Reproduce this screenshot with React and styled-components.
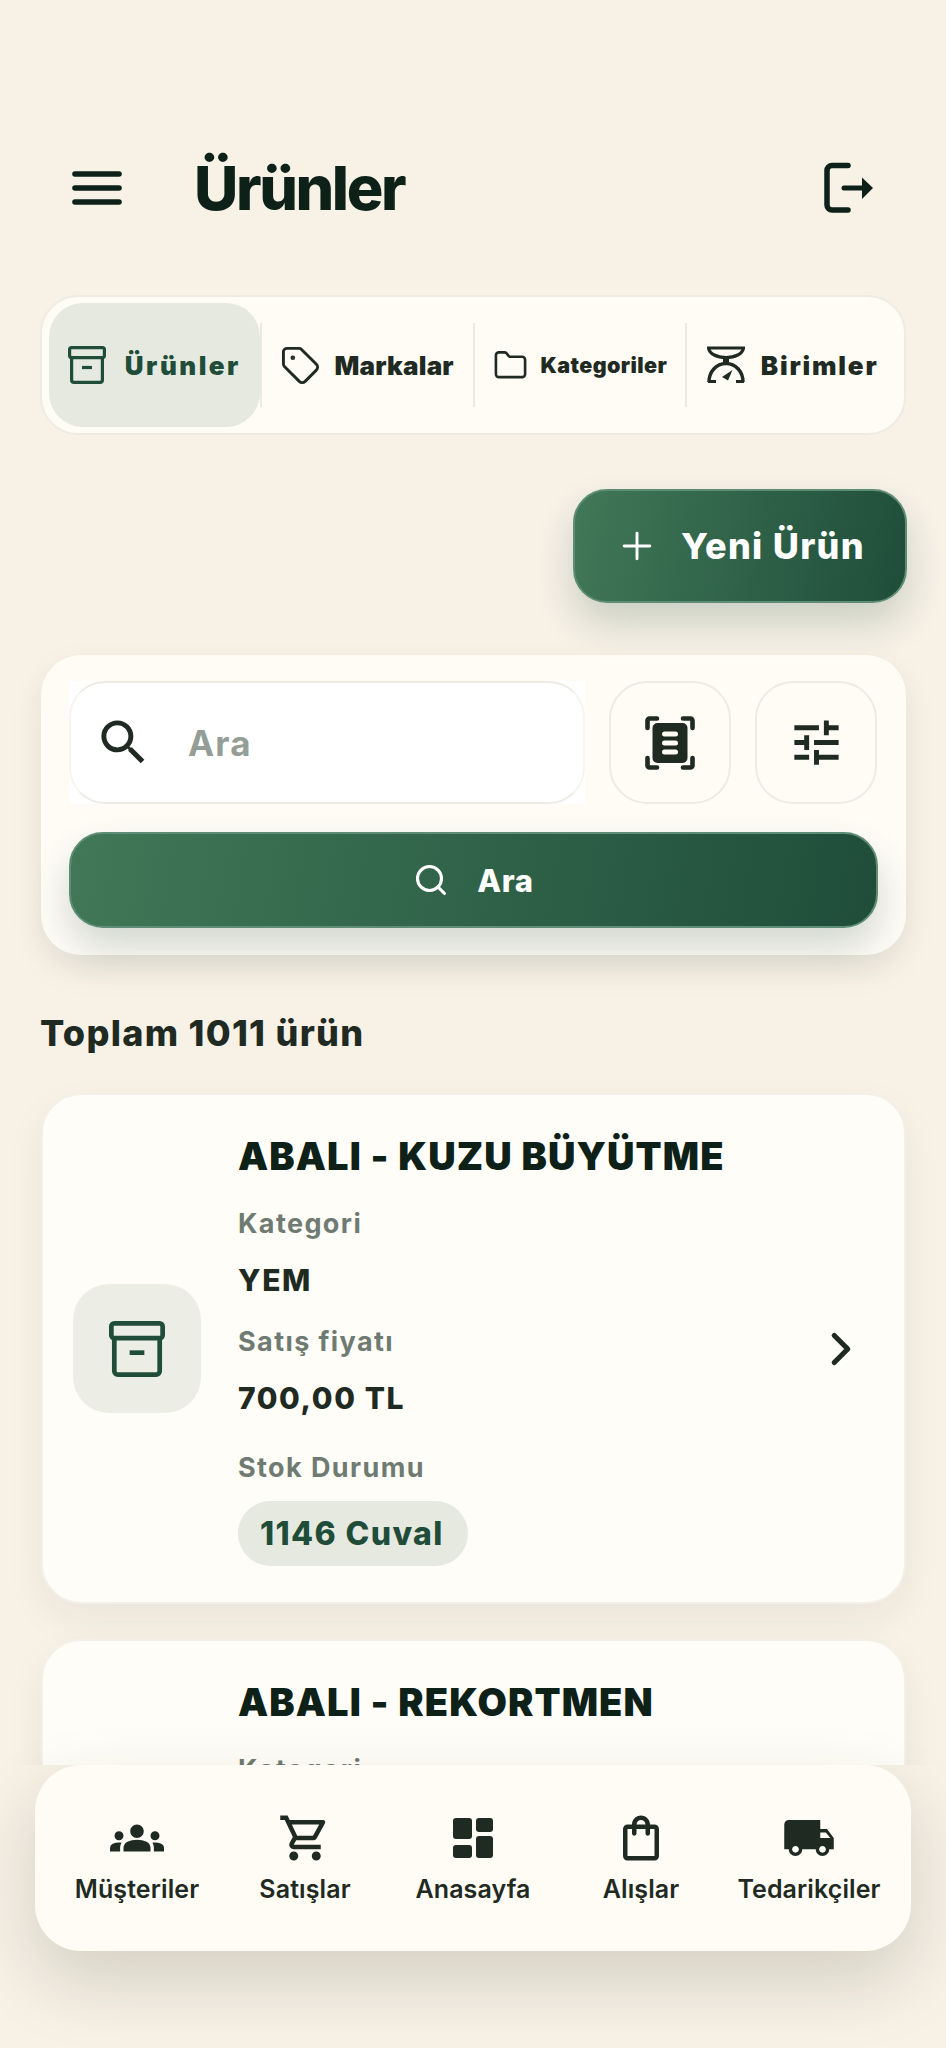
import React from "react";
import styled, { createGlobalStyle } from "styled-components";
import { Tag, Folder, Search, Plus, ChevronRight } from "lucide-react";
import {
  MdGroups,
  MdOutlineShoppingCart,
  MdOutlineShoppingBag,
  MdLocalShipping,
  MdTune,
  MdSearch,
} from "react-icons/md";

const INK = "#1f2a22";
const DARK = "#0d2118";
const GREEN = "#1f4d3a";

const GlobalStyle = createGlobalStyle`
  html, body {
    margin: 0;
    padding: 0;
    background: #f7f1e6;
    font-family: Inter, "Noto Sans", sans-serif;
  }
  * { box-sizing: border-box; }
`;

const Page = styled.div`
  height: 2048px;
  overflow: hidden;
  display: flex;
  flex-direction: column;
  background: #f7f1e6;
`;

const Scroll = styled.div`
  height: 1765px;
  flex: none;
  overflow: hidden;
  padding: 150px 40px 0 41px;
`;

const Header = styled.header`
  height: 76px;
  display: flex;
  align-items: center;
  margin-bottom: 69px;
`;

const IconSlot = styled.div`
  display: flex;
  align-items: center;
  justify-content: center;
  color: ${DARK};
`;

const MenuSlot = styled(IconSlot)`
  margin-left: 31px;
  width: 50px;
`;

const Title = styled.h1`
  flex: 1;
  margin: 0 0 0 72px;
  font-size: 61px;
  line-height: 76px;
  font-weight: 800;
  letter-spacing: -2.4px;
  color: ${DARK};
`;

const LogoutSlot = styled(IconSlot)`
  margin-right: 31px;
`;

const TabBar = styled.nav`
  height: 140px;
  margin-left: -1px;
  padding: 6px 6px 6px 7px;
  display: flex;
  align-items: center;
  background: #fffcf5;
  border: 2px solid #eeebe3;
  border-radius: 38px;
`;

const TabItem = styled.div`
  flex: 1;
  min-width: 0;
  height: 124px;
  display: flex;
  align-items: center;
  justify-content: center;
  gap: ${(p) => p.$gap}px;
  border-radius: 34px;
  color: ${(p) => (p.$active ? GREEN : INK)};
  background: ${(p) => (p.$active ? "#e6e9e0" : "transparent")};
`;

const TabLabel = styled.span`
  font-size: ${(p) => p.$size}px;
  font-weight: 900;
  letter-spacing: ${(p) => p.$spacing}px;
  white-space: nowrap;
`;

const TabDivider = styled.div`
  flex: none;
  width: 2px;
  height: 84px;
  background: #ebe9e1;
`;

const Actions = styled.div`
  display: flex;
  justify-content: flex-end;
  margin: 54px -1px 52px 0;
`;

const GradientButton = styled.button`
  display: flex;
  align-items: center;
  justify-content: center;
  font-family: inherit;
  color: #fff;
  background: linear-gradient(100deg, #417857 0%, #1f4d3a 100%);
  border: 2px solid #5f8c74;
  border-radius: 34px;
  box-shadow: 0 20px 38px rgba(31, 77, 58, 0.2);
`;

const NewButton = styled(GradientButton)`
  width: 334px;
  height: 114px;
  gap: 22px;
  font-size: 36px;
  font-weight: 800;
  letter-spacing: 1.3px;
`;

const SearchCard = styled.section`
  height: 300px;
  padding: 26px 28px 27px 28px;
  background: #fffcf6;
  border-radius: 40px;
  box-shadow: 0 14px 34px rgba(40, 50, 30, 0.08);
`;

const SearchRow = styled.div`
  display: flex;
  gap: 24px;
  margin: 0 1px 28px 0;
`;

const FieldBack = styled.div`
  flex: 1;
  height: 123px;
  background: #fff;
`;

const Field = styled.div`
  height: 100%;
  display: flex;
  align-items: center;
  gap: 35px;
  padding-left: 23px;
  border: 2px solid #f7f5f1;
  border-top-color: #eeebe5;
  border-bottom-color: #eeebe5;
  border-radius: 36px;
  color: ${INK};
`;

const Placeholder = styled.span`
  font-size: 35px;
  font-weight: 700;
  letter-spacing: 1.2px;
  color: #949e97;
`;

const SquareButton = styled.button`
  flex: none;
  width: 122px;
  height: 123px;
  display: flex;
  align-items: center;
  justify-content: center;
  color: ${INK};
  background: #fffcf6;
  border: 2px solid #eeebe5;
  border-radius: 38px;
`;

const SearchButton = styled(GradientButton)`
  width: 100%;
  height: 96px;
  gap: 28px;
  font-size: 31px;
  font-weight: 800;
  letter-spacing: 0.7px;
`;

const Total = styled.h2`
  margin: 56px 0 38px -1px;
  font-size: 36px;
  line-height: 44px;
  font-weight: 800;
  letter-spacing: 1.3px;
  color: ${INK};
`;

const Card = styled.article`
  height: 511px;
  margin-bottom: 35px;
  padding: 0 36px 0 30px;
  display: flex;
  align-items: center;
  background: #fffdf7;
  border: 2px solid #f3f0e9;
  border-radius: 40px;
  box-shadow: 0 16px 40px rgba(40, 50, 30, 0.06);
`;

const ThumbBox = styled.div`
  flex: none;
  width: 128px;
  height: 129px;
  margin-right: 37px;
  display: flex;
  align-items: center;
  justify-content: center;
  background: #eceee6;
  border-radius: 36px;
  color: ${GREEN};
`;

const CardBody = styled.div`
  flex: 1;
  min-width: 0;
  align-self: flex-start;
  padding-top: 39px;
`;

const ProductName = styled.h3`
  margin: 0;
  font-size: 38px;
  line-height: 44px;
  font-weight: 900;
  letter-spacing: 1.1px;
  color: ${DARK};
`;

const FieldLabel = styled.div`
  margin-top: ${(p) => p.$top}px;
  font-size: 27px;
  line-height: 30px;
  font-weight: 700;
  letter-spacing: 1.4px;
  color: #6f7b72;
`;

const FieldValue = styled.div`
  margin-top: 24px;
  font-size: 30px;
  line-height: 34px;
  font-weight: 800;
  letter-spacing: 1.6px;
  color: ${INK};
`;

const StockPill = styled.div`
  display: inline-flex;
  align-items: center;
  height: 65px;
  margin-top: 18px;
  padding: 0 24px 0 22px;
  font-size: 32px;
  font-weight: 800;
  letter-spacing: 1.4px;
  color: ${GREEN};
  background: #e6e9e0;
  border-radius: 33px;
`;

const Chevron = styled.div`
  flex: none;
  display: flex;
  color: ${INK};
`;

const BottomNav = styled.nav`
  position: relative;
  flex: none;
  height: 186px;
  margin: 0 35px 0 35px;
  padding: 0 18px;
  display: grid;
  grid-template-columns: repeat(5, 1fr);
  align-items: start;
  background: #fffcf5;
  border-radius: 46px;
  box-shadow: 0 30px 70px rgba(40, 50, 30, 0.17);
`;

const NavItem = styled.div`
  display: flex;
  flex-direction: column;
  align-items: center;
  padding-top: 46px;
  color: ${INK};
`;

const NavLabel = styled.span`
  margin-top: 9px;
  font-size: 25px;
  line-height: 30px;
  font-weight: 600;
  letter-spacing: 0.1px;
  white-space: nowrap;
`;

const MenuIcon = () => (
  <svg width="50" height="36" viewBox="0 0 50 36" fill="none" stroke="currentColor" strokeWidth="5.6" strokeLinecap="round">
    <path d="M3 4H47M3 18H47M3 32H47" />
  </svg>
);

const LogoutIcon = () => (
  <svg width="52" height="52" viewBox="0 0 52 52" fill="none">
    <path d="M25 3.5H9a5 5 0 0 0-5 5V43a5 5 0 0 0 5 5H25" stroke="currentColor" strokeWidth="5.5" strokeLinecap="round" />
    <path d="M21 26H42" stroke="currentColor" strokeWidth="5" strokeLinecap="round" />
    <path d="M39 15.5L50 26L39 37Z" fill="currentColor" />
  </svg>
);

const ArchiveIcon = ({ size }) => (
  <svg width={size} height={size} viewBox="0 0 38 38" fill="none" stroke="currentColor" strokeWidth="3.2" strokeLinejoin="round">
    <rect x="1.6" y="1.6" width="34.8" height="10" rx="2" />
    <path d="M3.6 11.6V34a2.4 2.4 0 0 0 2.4 2.4h26a2.4 2.4 0 0 0 2.4-2.4V11.6" />
    <path d="M14 21.5H24" />
  </svg>
);

const ScaleIcon = () => (
  <svg width="38" height="38" viewBox="0 0 38 38" fill="none">
    <path d="M1.5 2H36.5C35.5 8 28 11.5 19 11.5C10 11.5 2.5 8 1.5 2Z" stroke="currentColor" strokeWidth="3.2" />
    <rect x="16" y="11" width="6" height="8" fill="currentColor" />
    <path d="M2 36C2 26 9 17.5 19 17.5C29 17.5 36 26 36 36" stroke="currentColor" strokeWidth="3.4" />
    <path d="M1 35.5H9M29 35.5H37" stroke="currentColor" strokeWidth="3" />
    <path d="M25.5 24L21 34.5L15 31Z" fill="currentColor" />
  </svg>
);

const BarcodeIcon = () => (
  <svg width="50" height="54" viewBox="0 0 50 54" fill="none">
    <path
      d="M12 2.5H4.5a2 2 0 0 0-2 2V12M38 2.5H45.5a2 2 0 0 1 2 2V12M12 51.5H4.5a2 2 0 0 1-2-2V42M38 51.5H45.5a2 2 0 0 0 2-2V42"
      stroke="currentColor"
      strokeWidth="4.6"
      strokeLinecap="round"
    />
    <rect x="7.5" y="7" width="35" height="40" rx="5" fill="currentColor" />
    <rect x="17" y="15.5" width="16" height="5" rx="2.5" fill="#fffcf6" />
    <rect x="17" y="24.5" width="16" height="5" rx="2.5" fill="#fffcf6" />
    <rect x="17" y="33.5" width="16" height="5" rx="2.5" fill="#fffcf6" />
  </svg>
);

const DashboardIcon = () => (
  <svg width="54" height="54" viewBox="0 0 54 54" fill="currentColor">
    <rect x="7" y="7" width="19" height="21" rx="3" />
    <rect x="7" y="34" width="19" height="13" rx="3" />
    <rect x="30" y="7" width="17" height="14" rx="3" />
    <rect x="30" y="25" width="17" height="22" rx="3" />
  </svg>
);

const tabs = [
  { label: "Ürünler", icon: <ArchiveIcon size={38} />, active: true, size: 26, spacing: 2.5, gap: 19 },
  { label: "Markalar", icon: <Tag size={41} strokeWidth={1.7} />, size: 26, spacing: 0.2, gap: 13 },
  { label: "Kategoriler", icon: <Folder size={35} strokeWidth={1.8} />, size: 21.5, spacing: 0.4, gap: 13 },
  { label: "Birimler", icon: <ScaleIcon />, size: 26, spacing: 1.8, gap: 16 },
];

const navItems = [
  { label: "Müşteriler", icon: <MdGroups size={54} /> },
  { label: "Satışlar", icon: <MdOutlineShoppingCart size={54} /> },
  { label: "Anasayfa", icon: <DashboardIcon /> },
  { label: "Alışlar", icon: <MdOutlineShoppingBag size={54} /> },
  { label: "Tedarikçiler", icon: <MdLocalShipping size={54} /> },
];

// the second card is cut off by the bottom bar, only its top shows
const products = [
  { name: "ABALI - KUZU BÜYÜTME", category: "YEM", price: "700,00 TL", stock: "1146 Cuval" },
  { name: "ABALI - REKORTMEN" },
];

const ProductCard = ({ product }) => (
  <Card>
    <ThumbBox>
      <ArchiveIcon size={56} />
    </ThumbBox>
    <CardBody>
      <ProductName>{product.name}</ProductName>
      <FieldLabel $top={31}>Kategori</FieldLabel>
      {product.category && (
        <>
          <FieldValue>{product.category}</FieldValue>
          <FieldLabel $top={30}>Satış fiyatı</FieldLabel>
          <FieldValue>{product.price}</FieldValue>
          <FieldLabel $top={38}>Stok Durumu</FieldLabel>
          <StockPill>{product.stock}</StockPill>
        </>
      )}
    </CardBody>
    <Chevron>
      <ChevronRight size={54} strokeWidth={2.3} />
    </Chevron>
  </Card>
);

const App = () => {
  return (
    <Page>
      <GlobalStyle />
      <Scroll>
        <Header>
          <MenuSlot>
            <MenuIcon />
          </MenuSlot>
          <Title>Ürünler</Title>
          <LogoutSlot>
            <LogoutIcon />
          </LogoutSlot>
        </Header>

        <TabBar>
          {tabs.map((tab, i) => (
            <React.Fragment key={tab.label}>
              {i > 0 && <TabDivider />}
              <TabItem $active={tab.active} $gap={tab.gap}>
                {tab.icon}
                <TabLabel $size={tab.size} $spacing={tab.spacing}>
                  {tab.label}
                </TabLabel>
              </TabItem>
            </React.Fragment>
          ))}
        </TabBar>

        <Actions>
          <NewButton>
            <Plus size={44} strokeWidth={1.6} />
            Yeni Ürün
          </NewButton>
        </Actions>

        <SearchCard>
          <SearchRow>
            <FieldBack>
              <Field>
                <MdSearch size={59} />
                <Placeholder>Ara</Placeholder>
              </Field>
            </FieldBack>
            <SquareButton>
              <BarcodeIcon />
            </SquareButton>
            <SquareButton>
              <MdTune size={59} />
            </SquareButton>
          </SearchRow>
          <SearchButton>
            <Search size={36} strokeWidth={2.1} />
            Ara
          </SearchButton>
        </SearchCard>

        <Total>Toplam 1011 ürün</Total>

        {products.map((product) => (
          <ProductCard key={product.name} product={product} />
        ))}
      </Scroll>

      <BottomNav>
        {navItems.map((item) => (
          <NavItem key={item.label}>
            {item.icon}
            <NavLabel>{item.label}</NavLabel>
          </NavItem>
        ))}
      </BottomNav>
    </Page>
  );
};

export default App;
